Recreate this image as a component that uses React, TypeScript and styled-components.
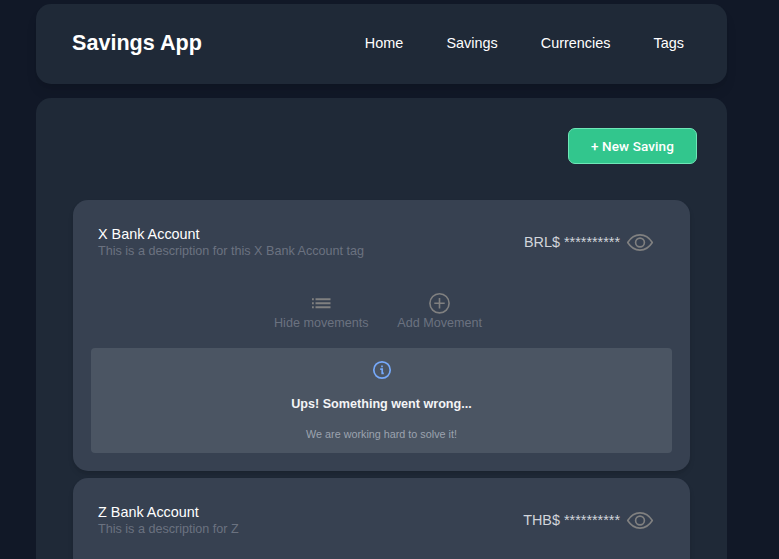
import React from "react";
import styled, { createGlobalStyle } from "styled-components";

const GlobalStyle = createGlobalStyle`
  *, *::before, *::after { box-sizing: border-box; }
  html { font-size: 14.4px; }
  body {
    margin: 0;
    background: #111827;
    color: #fff;
    font-family: "Liberation Sans", Arial, sans-serif;
    overflow: hidden;
  }
  h1, h2, p { margin: 0; }
`;

const Page = styled.div`
  display: flex;
  flex-direction: column;
  gap: 14px;
  width: 691px;
  height: 559px;
  margin-left: 36px;
  padding-top: 4px;
`;

const Header = styled.header`
  display: flex;
  flex: none;
  align-items: center;
  justify-content: space-between;
  height: 80px;
  padding: 0 43px 2px 36px;
  border-radius: 15px;
  background: #1f2937;
  box-shadow: 0 9px 14px -3px rgba(0, 0, 0, 0.1), 0 4px 6px -4px rgba(0, 0, 0, 0.1);
`;

const Brand = styled.h1`
  font-size: 1.5rem;
  line-height: 30px;
  font-weight: 700;
`;

const Nav = styled.nav`
  display: flex;
  gap: 43.2px;
`;

const NavLink = styled.a`
  font-size: 1rem;
  line-height: 22px;
  color: #fff;
`;

const Main = styled.main`
  display: flex;
  flex: 1;
  flex-direction: column;
  padding: 30px 30px 0 37px;
  border-radius: 15px 15px 0 0;
  background: #1f2937;
`;

const NewButton = styled.button`
  flex: none;
  align-self: flex-end;
  width: 129px;
  height: 36px;
  padding: 0 0 1px;
  border: 1px solid #6ee7b7;
  border-radius: 7px;
  background: #32c68d;
  color: #fff;
  font-family: Roboto, "Liberation Sans", sans-serif;
  font-size: 13.5px;
  font-weight: 500;
  letter-spacing: 0.1px;
`;

const List = styled.section`
  display: flex;
  flex: 1;
  flex-direction: column;
  gap: 7px;
  width: 617px;
  margin-top: 36px;
`;

const Card = styled.article<{ $open?: boolean }>`
  flex: ${(p) => (p.$open ? "none" : "1")};
  height: ${(p) => (p.$open ? "271px" : "auto")};
  padding: 25px 18px 0;
  border-radius: ${(p) => (p.$open ? "15px" : "15px 15px 0 0")};
  background: #374151;
  box-shadow: 0 4px 6px -1px rgba(0, 0, 0, 0.1), 0 2px 4px -2px rgba(0, 0, 0, 0.1);
`;

const Summary = styled.div`
  display: flex;
  justify-content: space-between;
  align-items: center;
  height: 34px;
  padding: 0 18px 0 7px;
`;

const Name = styled.h2`
  font-size: 1rem;
  line-height: 17px;
  font-weight: 400;
`;

const Description = styled.p`
  font-size: 0.875rem;
  line-height: 16px;
  color: #6b7280;
`;

const Balance = styled.div`
  display: flex;
  align-items: center;
  gap: 6px;
  font-size: 1rem;
  color: #d1d5db;
`;

const Actions = styled.div`
  display: flex;
  justify-content: center;
  gap: 28.8px;
  margin-top: 33px;
  padding-right: 7px;
`;

const Action = styled.div`
  display: flex;
  flex-direction: column;
  align-items: center;
  font-size: 0.875rem;
  line-height: 18px;
  color: #6b7280;
`;

const Notice = styled.div`
  display: flex;
  flex-direction: column;
  align-items: center;
  height: 105px;
  margin-top: 16px;
  padding-top: 11px;
  border-radius: 4px;
  background: #4b5563;
`;

const NoticeTitle = styled.p`
  margin-top: 14px;
  font-size: 0.875rem;
  line-height: 18px;
  font-weight: 700;
  color: #f3f4f6;
`;

const NoticeText = styled.p`
  margin-top: 14px;
  font-size: 0.75rem;
  line-height: 14px;
  color: #9ca3af;
`;

const Icon = styled.svg`
  display: block;
  flex: none;
  fill: none;
  stroke: #808080;
`;

const EyeIcon = () => (
  <Icon width="28" height="20" viewBox="0 0 28 20" strokeWidth="1.6">
    <path
      d="M1.700 10.500C4.800 5.600 9 2.900 14 2.900s9.200 2.700 12.300 7.600c-3.100 4.900-7.300 7.600-12.300 7.600S4.800 15.400 1.700 10.500Z"
      strokeLinejoin="round"
    />
    <circle cx="14" cy="10.500" r="4.400" />
  </Icon>
);

const ListIcon = () => (
  <Icon width="22" height="22" viewBox="0 0 22 22" strokeWidth="2">
    <path d="M2 7.300h1.800M2 11.300h1.800M2 15.300h1.800M5.500 7.300h15M5.500 11.300h15M5.500 15.300h15" />
  </Icon>
);

const AddIcon = () => (
  <Icon width="22" height="22" viewBox="0 0 22 22" strokeWidth="1.600">
    <circle cx="10.500" cy="11.300" r="9.600" />
    <path d="M10.500 6.100v10.400M5.300 11.300h10.400" />
  </Icon>
);

const BlueIcon = styled(Icon)`
  stroke: #76a9fa;
`;

const InfoIcon = () => (
  <BlueIcon width="22" height="22" viewBox="0 0 22 22" strokeWidth="1.700">
    <circle cx="11" cy="11" r="8.200" />
    <path d="M11 6.400v1.800M9.200 10.200h2v4.600M10.400 14.400h2.400" />
  </BlueIcon>
);

interface AccountProps {
  name: string;
  description: string;
  currency: string;
  open?: boolean;
}

const Account = ({ name, description, currency, open }: AccountProps) => (
  <Card $open={open}>
    <Summary>
      <div>
        <Name>{name}</Name>
        <Description>{description}</Description>
      </div>
      <Balance>
        <span>{currency}$ **********</span>
        <EyeIcon />
      </Balance>
    </Summary>
    {open && (
      <>
        <Actions>
          <Action>
            <ListIcon />
            Hide movements
          </Action>
          <Action>
            <AddIcon />
            Add Movement
          </Action>
        </Actions>
        <Notice>
          <InfoIcon />
          <NoticeTitle>Ups! Something went wrong...</NoticeTitle>
          <NoticeText>We are working hard to solve it!</NoticeText>
        </Notice>
      </>
    )}
  </Card>
);

export default function App() {
  return (
    <>
      <GlobalStyle />
      <Page>
        <Header>
          <Brand>Savings App</Brand>
          <Nav>
            {["Home", "Savings", "Currencies", "Tags"].map((item) => (
              <NavLink key={item}>{item}</NavLink>
            ))}
          </Nav>
        </Header>
        <Main>
          <NewButton>+ New Saving</NewButton>
          <List>
            <Account
              open
              name="X Bank Account"
              description="This is a description for this X Bank Account tag"
              currency="BRL"
            />
            <Account name="Z Bank Account" description="This is a description for Z" currency="THB" />
          </List>
        </Main>
      </Page>
    </>
  );
}
